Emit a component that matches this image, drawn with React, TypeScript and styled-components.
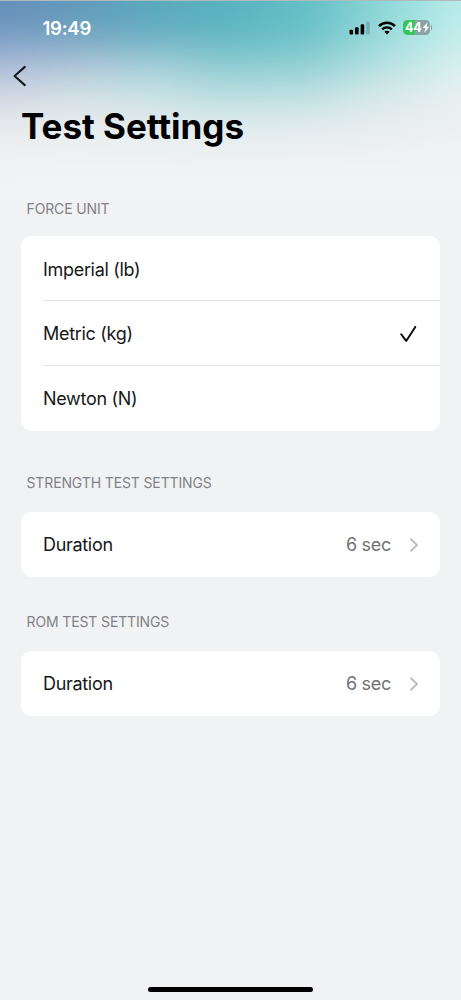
import React from "react";
import styled, { createGlobalStyle } from "styled-components";

const GlobalStyle = createGlobalStyle`
  * { box-sizing: border-box; }
  body { margin: 0; background: #f1f2f4; font-family: Inter, "Liberation Sans", sans-serif; }
`;

const Screen = styled.main`
  position: relative;
  isolation: isolate;
  width: 461px;
  height: 1000px;
  display: flex;
  flex-direction: column;
  overflow: hidden;
  border-top: 1px solid #b0b9bc;
  background: #f1f2f4;
`;

const Glow = styled.div`
  position: absolute;
  inset: -40px -40px auto;
  height: 240px;
  z-index: -1;
  filter: blur(13px);
`;

const GlowBand = styled.div<{ $from: number; $to: number; $colors: string[] }>`
  position: absolute;
  inset: 0;
  background: linear-gradient(90deg, ${(p) => p.$colors[0]} 40px, ${(p) => p.$colors.slice(1, -1).join(", ")}, ${(p) => p.$colors[p.$colors.length - 1]} 501px);
  mask-image: linear-gradient(180deg, transparent ${(p) => p.$from + 40}px, #000 ${(p) => p.$to + 40}px);
`;

const StatusBar = styled.header`
  display: flex;
  align-items: center;
  justify-content: space-between;
  height: 54px;
  padding: 0 29px 0 42.5px;
`;

const Time = styled.time`
  color: #fff;
  font-size: 18.5px;
  font-weight: 600;
  letter-spacing: -0.25px;
  line-height: 22px;
`;

const StatusIcons = styled.div`
  display: flex;
  align-items: center;
  gap: 7px;
  padding-bottom: 1px;
`;

const Battery = styled.div`
  position: relative;
  display: flex;
  align-items: center;
  width: 27px;
  height: 15px;
  margin-right: 2px;
  padding-left: 2px;
  border-radius: 4.5px;
  background: linear-gradient(90deg, #35c759 44%, #8aa4a4 44%);
  color: #fff;
  font-size: 12.5px;
  font-weight: 700;
  line-height: 15px;
  letter-spacing: -0.2px;
`;

const BatteryCap = styled.span`
  position: absolute;
  right: -2px;
  top: 5px;
  width: 1.4px;
  height: 5px;
  border-radius: 0 2px 2px 0;
  background: #8aa4a4;
`;

const BackButton = styled.button`
  display: flex;
  align-items: center;
  width: 44px;
  height: 42px;
  padding: 0 0 0 12px;
  border: 0;
  background: transparent;
`;

const Title = styled.h1`
  margin: 5px 0 0 21px;
  color: #000;
  font-size: 35px;
  font-weight: 700;
  line-height: 49px;
  letter-spacing: -0.03px;
  font-feature-settings: "calt" 0, "liga" 0, "dlig" 0;
  white-space: nowrap;
`;

const Section = styled.section<{ $top: number; $gap: number }>`
  margin: ${(p) => p.$top}px 21px 0;
  display: flex;
  flex-direction: column;
  gap: ${(p) => p.$gap}px;
`;

const SectionLabel = styled.h2`
  margin: 0 0 0 5.5px;
  color: #818286;
  font-size: 14px;
  font-weight: 400;
  line-height: 18px;
  letter-spacing: -0.13px;
`;

const Card = styled.div`
  padding-left: 22px;
  border-radius: 11px;
  background: #fff;
`;

const Row = styled.div<{ $height: number; $inset: number }>`
  display: flex;
  align-items: center;
  height: ${(p) => p.$height}px;
  padding: ${(p) => p.$inset}px 21px 0 0;
  & + & { border-top: 1px solid #e4e5e6; }
`;

const RowLabel = styled.span`
  flex: 1;
  color: #171717;
  font-size: 18px;
  line-height: 25px;
  letter-spacing: -0.31px;
`;

const Value = styled.span`
  margin-right: 18px;
  color: #707174;
  font-size: 18px;
  line-height: 25px;
  letter-spacing: -0.29px;
`;

const HomeIndicator = styled.div`
  width: 165px;
  height: 5px;
  margin: auto auto 8px 148px;
  border-radius: 3px;
  background: #000;
`;

const Signal = () => (
  <svg width="22" height="14" viewBox="0 0 22 14">
    <rect x="0.5" y="8.7" width="3.6" height="4.8" rx="1.1" />
    <rect x="6" y="6.2" width="3.6" height="7.3" rx="1.1" />
    <rect x="11.6" y="3.3" width="3.6" height="10.2" rx="1.1" />
    <rect x="17.2" y="0.5" width="3.6" height="13" rx="1.1" fill="#6fa3a8" fillOpacity="0.75" />
  </svg>
);

const Wifi = () => (
  <svg width="18" height="14" viewBox="0 0 18 14" fill="none" stroke="#000" strokeWidth="2.4">
    <path d="M1 5.1C5.5 0.6 12.5 0.6 17 5.1" />
    <path d="M4.1 8.4C6.9 5.7 11.1 5.7 13.9 8.4" />
    <path d="M6.3 10.7C7.8 9.3 10.2 9.3 11.7 10.7L9 13.5Z" fill="#000" stroke="none" />
  </svg>
);

const Bolt = () => (
  <svg width="8" height="11" viewBox="0 0 8 11" fill="#fff">
    <path d="M5.5 0.3L0.5 6.1H3.3L2.3 10.7L7.4 4.7H4.5Z" />
  </svg>
);

const BackIcon = () => (
  <svg width="15" height="22" viewBox="0 0 15 22" fill="none" stroke="#171b1c" strokeWidth="2.1" strokeLinecap="round" strokeLinejoin="round">
    <path d="M12.8 1.9L2.6 11L12.8 20.1" />
  </svg>
);

const CheckIcon = () => (
  <svg width="20" height="18" viewBox="0 0 20 18" fill="none" stroke="#080808" strokeWidth="1.9" strokeLinecap="round" strokeLinejoin="round">
    <path d="M2.2 9.3L7.2 15.9L16.3 1.9" />
  </svg>
);

const Disclosure = () => (
  <svg width="10" height="14" viewBox="0 0 10 14" fill="none" stroke="#bcbdbf" strokeWidth="1.9" strokeLinecap="round" strokeLinejoin="round">
    <path d="M2 1.3L8 7L2 12.7" />
  </svg>
);

const glowBands = [
  { from: -42, to: -41, colors: ["#648cb8", "#5f9abb", "#58a8bd", "#57b3c1", "#63bfc6", "#8dd6d8", "#b7edeb"] },
  { from: 0, to: 30, colors: ["#7498c2", "#70a2c0", "#66adc0", "#60b6c2", "#6bc1c8", "#98dadb", "#c1eeec"] },
  { from: 30, to: 60, colors: ["#a6b7d5", "#a7c0d4", "#9dcad6", "#87c9cf", "#8dced2", "#b3e0e1", "#d6f0ef"] },
  { from: 60, to: 85, colors: ["#c7d0e0", "#cadae2", "#bedee2", "#add9dc", "#b2dcdf", "#cfe7e8", "#e5f0f0"] },
  { from: 85, to: 110, colors: ["#dfe2e8", "#e1e7ea", "#d9e7ea", "#cee5e7", "#d4e6e8", "#e2ebec", "#ebf0f0"] },
  { from: 110, to: 135, colors: ["#ebedef", "#eceff0", "#e9eff0", "#e7eeef", "#e9eeef", "#eceff0", "#eff1f2"] },
  { from: 135, to: 165, colors: ["#f1f2f4", "#f1f2f4", "#f1f2f4"] },
];

const units = [
  { name: "Imperial (lb)", selected: false, height: 64, inset: 3 },
  { name: "Metric (kg)", selected: true, height: 65, inset: 1.5 },
  { name: "Newton (N)", selected: false, height: 65.5, inset: 0.8 },
];

const DurationCard = () => (
  <Card>
    <Row $height={64.5} $inset={0.5}>
      <RowLabel>Duration</RowLabel>
      <Value>6 sec</Value>
      <Disclosure />
    </Row>
  </Card>
);

export default function App() {
  return (
    <>
      <GlobalStyle />
      <Screen>
        <Glow aria-hidden="true">
          {glowBands.map((band) => (
            <GlowBand key={band.to} $from={band.from} $to={band.to} $colors={band.colors} />
          ))}
        </Glow>
        <StatusBar>
          <Time>19:49</Time>
          <StatusIcons>
            <Signal />
            <Wifi />
            <Battery>
              44
              <Bolt />
              <BatteryCap />
            </Battery>
          </StatusIcons>
        </StatusBar>
        <BackButton aria-label="Back"><BackIcon /></BackButton>
        <Title>Test Settings</Title>
        <Section $top={48.5} $gap={18.5}>
          <SectionLabel>FORCE UNIT</SectionLabel>
          <Card>
            {units.map((unit) => (
              <Row key={unit.name} $height={unit.height} $inset={unit.inset}>
                <RowLabel>{unit.name}</RowLabel>
                {unit.selected && <CheckIcon />}
              </Row>
            ))}
          </Card>
        </Section>
        <Section $top={43.5} $gap={20}>
          <SectionLabel>STRENGTH TEST SETTINGS</SectionLabel>
          <DurationCard />
        </Section>
        <Section $top={36.5} $gap={20}>
          <SectionLabel>ROM TEST SETTINGS</SectionLabel>
          <DurationCard />
        </Section>
        <HomeIndicator />
      </Screen>
    </>
  );
}
